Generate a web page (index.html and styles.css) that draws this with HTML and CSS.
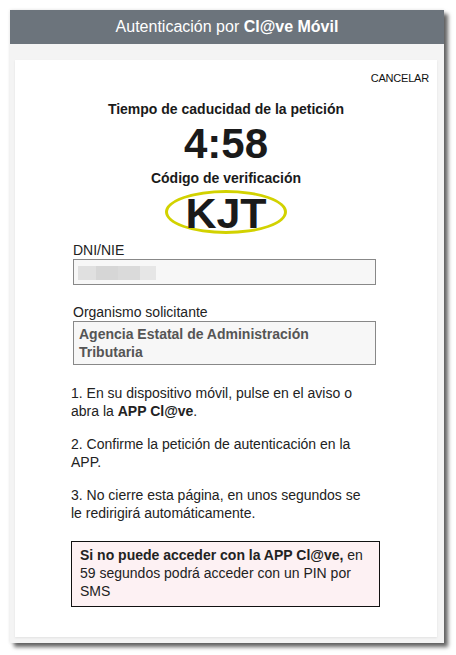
FILE: index.html
```html
<!DOCTYPE html>
<html lang="es">
<head>
    <meta charset="UTF-8" />
    <meta name="viewport" content="width=device-width, initial-scale=1.0"/>
    <title>Autenticación por Cl@ve Móvil</title>
    <link rel="stylesheet" href="styles.css">
</head>
<body>

    <div class="window">
        <div class="window-header">Autenticación por <b>Cl@ve Móvil</b></div>

        <div class="window-body">
            <div class="card">
                <div class="cancel-row">
                    <a class="cancel" href="#">CANCELAR</a>
                </div>

                <div class="expiry-title">Tiempo de caducidad de la petición</div>
                <div class="timer">4:58</div>
                <div class="code-title">Código de verificación</div>
                <div class="code-row">
                    <span class="code">KJT</span>
                </div>

                <div class="fields">
                    <label class="field-label">DNI/NIE</label>
                    <div class="field-box dni">
                        <span class="blur b1"></span><span class="blur b2"></span><span class="blur b3"></span><span class="blur b4"></span>
                    </div>

                    <label class="field-label">Organismo solicitante</label>
                    <div class="field-box org">Agencia Estatal de Administración Tributaria</div>
                </div>

                <div class="steps">
                    <p>1. En su dispositivo móvil, pulse en el aviso o abra la <b>APP Cl@ve</b>.</p>
                    <p>2. Confirme la petición de autenticación en la APP.</p>
                    <p>3. No cierre esta página, en unos segundos se le redirigirá automáticamente.</p>
                </div>

                <div class="sms-notice">
                    <b>Si no puede acceder con la APP Cl@ve,</b> en 59 segundos podrá acceder con un PIN por SMS
                </div>
            </div>
        </div>
    </div>

</body>
</html>
```

FILE: styles.css
```css
body {
    margin: 0;
    padding: 10px;
    background: #fff;
    font-family: "Liberation Sans", Arial, sans-serif;
    color: #222;
}

.window {
    width: 434px;
    height: 633px;
    display: flex;
    flex-direction: column;
    background: #f4f4f4;
    box-shadow: 4px 4px 4px rgba(0, 0, 0, 0.6), 0 0 3px rgba(0, 0, 0, 0.12);
}

.window-header {
    height: 34px;
    line-height: 34px;
    background: #6c747c;
    color: #fff;
    text-align: center;
    font-size: 16px;
}

.window-body {
    flex: 1;
    padding: 16px 7px 6px 5px;
    display: flex;
}

.card {
    flex: 1;
    background: #fff;
    box-shadow: 0 1px 2px rgba(0, 0, 0, 0.08);
    padding: 10px 8px 0 56px;
}

.cancel-row {
    text-align: right;
    line-height: 13px;
}

.cancel {
    font-size: 11px;
    letter-spacing: -0.2px;
    color: #111;
    text-decoration: none;
}

.expiry-title,
.code-title {
    font-size: 14px;
    font-weight: bold;
    line-height: 16px;
    text-align: center;
    margin-right: 48px;
    color: #1a1a1a;
}

.expiry-title {
    margin-top: 16px;
}

.timer {
    font-size: 42px;
    font-weight: bold;
    line-height: 46px;
    text-align: center;
    margin: 4px 48px 0 0;
    color: #1a1a1a;
}

.code-title {
    margin-top: 3px;
}

.code-row {
    text-align: center;
    margin: 4px 48px 0 0;
}

.code {
    display: inline-block;
    width: 116px;
    height: 38px;
    line-height: 41px;
    border: 3px solid #d2d200;
    border-radius: 50%;
    font-size: 43px;
    font-weight: bold;
    color: #1a1a1a;
}

.fields {
    margin-top: 8px;
    padding-left: 2px;
    width: 303px;
}

.field-label {
    display: block;
    font-size: 14px;
    line-height: 16px;
    color: #222;
    margin-bottom: 1px;
}

.field-box {
    border: 1px solid #888;
    background: #f7f7f7;
    box-sizing: border-box;
}

.dni {
    height: 26px;
    padding: 6px 4px;
    display: flex;
    margin-bottom: 19px;
}

.blur {
    display: inline-block;
    height: 14px;
    background: #dcdcdc;
}

.b1 { width: 18px; background: #e0e0e0; }
.b2 { width: 22px; background: #d6d6d6; }
.b3 { width: 22px; background: #dadada; }
.b4 { width: 16px; background: #e6e6e6; }

.org {
    height: 44px;
    padding: 3px 5px;
    font-size: 14px;
    font-weight: bold;
    line-height: 18px;
    color: #555;
}

.steps {
    margin-top: 19px;
    width: 300px;
}

.steps p {
    margin: 0 0 15px 0;
    font-size: 14px;
    line-height: 18px;
    color: #222;
}

.sms-notice {
    width: 309px;
    box-sizing: border-box;
    margin: 19px 0 0 0;
    padding: 4px 8px 6px 8px;
    border: 1px solid #111;
    background: #fdf1f3;
    font-size: 14px;
    line-height: 18px;
    color: #222;
}
```
